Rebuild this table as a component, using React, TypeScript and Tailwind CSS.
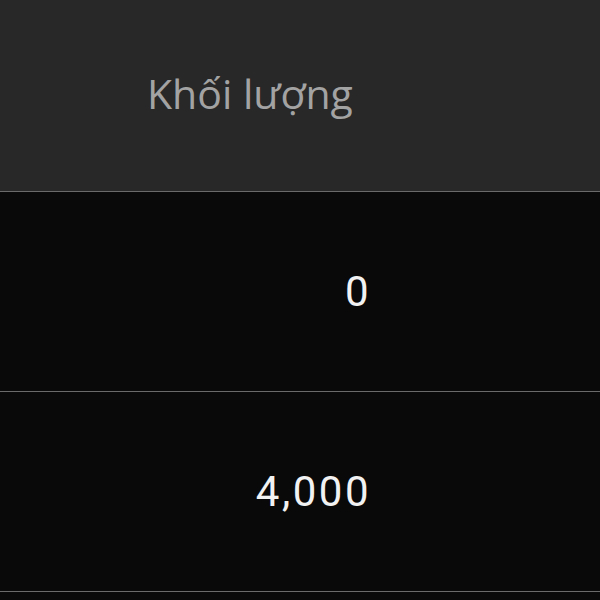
const rows = [
  { id: 1, volume: '0' },
  { id: 2, volume: '4,000' },
]

export default function App() {
  return (
    <div className="h-[600px] w-[600px] overflow-hidden bg-[#0a090a]">
      <div className="flex h-[192px] items-center border-b border-[#6a6a6a] bg-[#282828] pb-[4px] pl-[147px]">
        <span
          className="text-[41px] leading-none text-[#a3a3a3]"
          style={{ fontFamily: '"Open Sans", sans-serif' }}
        >
          Khối lượng
        </span>
      </div>
      {rows.map((row) => (
        <div
          key={row.id}
          className="flex h-[200px] items-center border-b border-[#6a6a6a]"
        >
          <div className="w-[371px] text-right">
            <span
              className="text-[42px] leading-none tracking-[2.5px] text-[#f2f2f2]"
              style={{ fontFamily: 'Roboto, sans-serif' }}
            >
              {row.volume}
            </span>
          </div>
        </div>
      ))}
    </div>
  )
}
